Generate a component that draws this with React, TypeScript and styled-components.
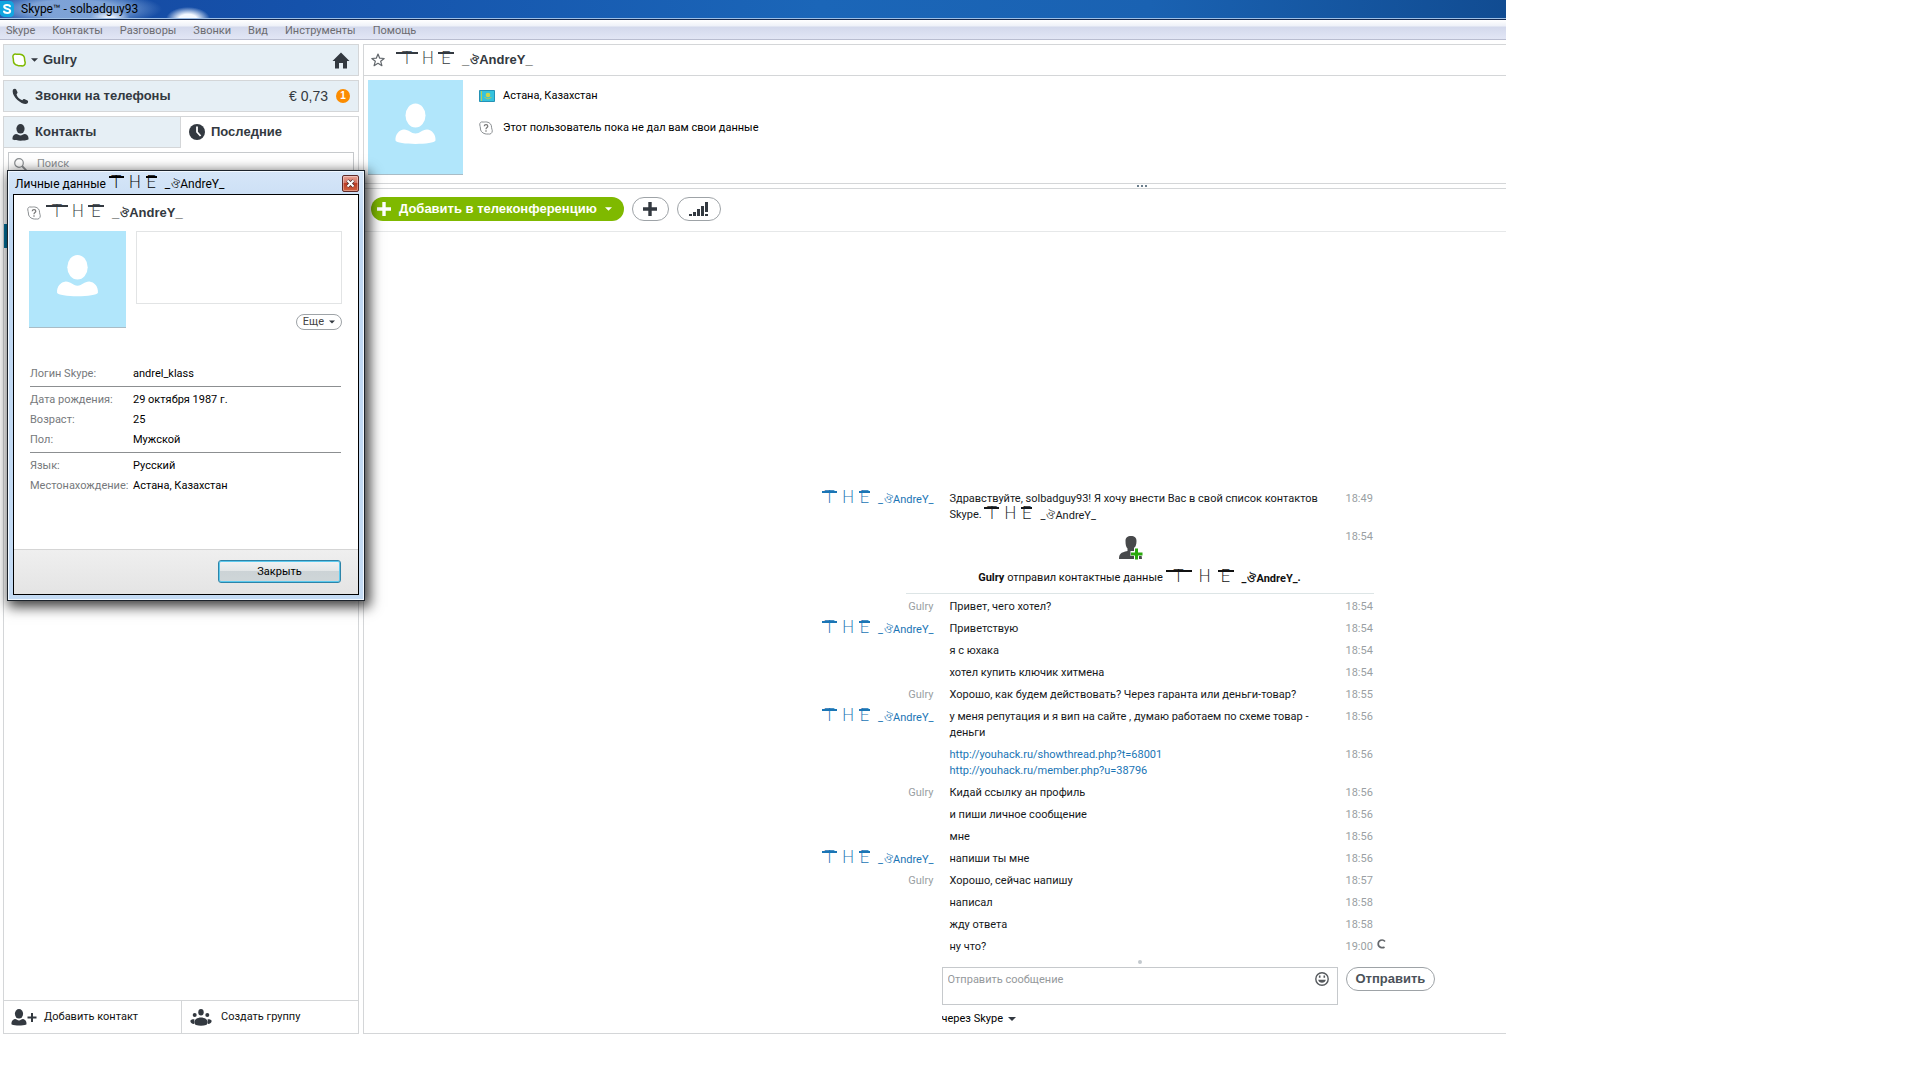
import React from "react";
import styled, { createGlobalStyle, css } from "styled-components";

const ui = `Roboto, "Noto Sans", sans-serif`;
const heading = `"Liberation Sans", Arial, sans-serif`;

const ink = "#333940";
const line = "#d4d6d8";
const panelBlue = "#e6eff5";
const muted = "#9a9fa3";
const blue = "#1a75b5";

const GlobalStyle = createGlobalStyle`
  * { box-sizing: border-box; }
  html, body { margin: 0; background: #fff; }
  body { font: 11px/16px ${ui}; color: #111; }
  button, input, textarea, select { font: inherit; color: inherit; margin: 0; }
  button { cursor: pointer; }
  svg { display: block; flex: none; }
`;

const Viewport = styled.div`
  position: relative;
  min-height: 100vh;
  padding-bottom: 46px;
  margin-right: 414px;
  overflow: hidden;
  display: flex;
`;

const Window = styled.div`
  flex: none;
  width: calc(100% + 414px);
  display: flex;
  flex-direction: column;
`;

const TitleBar = styled.header`
  height: 20px;
  padding: 0 0 2px;
  display: flex;
  align-items: center;
  gap: 6px;
  border-bottom: 1px solid #14284e;
  box-shadow: inset 0 -1px 0 #9fc0e6;
  font: 12px/18px ${ui};
  color: #000;
  background:
    radial-gradient(ellipse 22px 12px at 188px 19px, #f4f9ff 40%, transparent 100%),
    radial-gradient(ellipse 20px 8px at 110px 18px, #e6eefc 20%, transparent 100%),
    radial-gradient(ellipse 90px 18px at 72px 9px, rgba(160, 192, 232, 0.75) 50%, transparent 100%),
    linear-gradient(90deg, #1748a0 0, #1552ab 300px, #1b66b8 820px, #1a62b2 1150px, #114c92 1506px);
`;

const MenuBar = styled.nav`
  height: 20px;
  padding: 2px 6px 0;
  display: flex;
  align-items: center;
  gap: 17px;
  border-bottom: 1px solid #b9bdd0;
  background: linear-gradient(#fff 0, #eef1f8 6px, #d3d9ec 7px, #e2e6f5 100%);
`;

const MenuItem = styled.a`
  color: #6c6c70;
  text-decoration: none;
`;

const Workspace = styled.div`
  flex: 1;
  display: flex;
  gap: 4px;
  padding: 4px 0 0 3px;
`;

const Sidebar = styled.aside`
  width: 356px;
  flex: none;
  display: flex;
  flex-direction: column;
  gap: 4px;
`;

const barText = css`
  font: bold 13px/16px ${heading};
  color: ${ink};
`;

const SideBox = styled.div`
  ${barText}
  height: 32px;
  display: flex;
  align-items: center;
  padding: 0 8px;
  border: 1px solid ${line};
  background: ${panelBlue};
`;

const Grow = styled.span`
  flex: 1;
`;

const StatusButton = styled.button`
  ${barText}
  display: flex;
  align-items: center;
  gap: 5px;
  padding: 0;
  border: 0;
  background: none;
`;

const IconLabel = styled.span`
  display: flex;
  align-items: center;
  gap: 6px;
`;

const Balance = styled.span`
  font: 14px/16px ${heading};
  margin-right: 8px;
`;

const Badge = styled.span`
  width: 14px;
  height: 14px;
  border-radius: 7px;
  background: #fb8c00;
  color: #fff;
  font: bold 10px/14px ${heading};
  text-align: center;
`;

const SidePanel = styled.section`
  flex: 1;
  display: flex;
  flex-direction: column;
  border: 1px solid ${line};
`;

const Tabs = styled.div`
  display: grid;
  grid-template-columns: 1fr 1fr;
`;

const Tab = styled.button<{ $active?: boolean }>`
  ${barText}
  height: 31px;
  display: flex;
  align-items: center;
  gap: 6px;
  padding: 0 8px;
  border: 0;
  border-bottom: 1px solid ${(p) => (p.$active ? "transparent" : line)};
  border-right: 1px solid ${(p) => (p.$active ? "transparent" : line)};
  background: ${(p) => (p.$active ? "#fff" : panelBlue)};
`;

const SearchBox = styled.label`
  display: flex;
  align-items: center;
  gap: 10px;
  height: 24px;
  margin: 4px 4px 0;
  padding: 0 5px;
  border: 1px solid #c6c9cc;
`;

const SearchInput = styled.input`
  flex: 1;
  border: 0;
  padding: 0;
  outline: 0;
  background: none;
  &::placeholder { color: #8d9194; opacity: 1; }
`;

const RecentList = styled.div`
  flex: 1;
  padding-top: 48px;
`;

const RecentRow = styled.div`
  height: 24px;
  background: #00719c;
`;

const SideFooter = styled.div`
  display: grid;
  grid-template-columns: 1fr 1fr;
  border-top: 1px solid ${line};
`;

const FooterButton = styled.button`
  height: 32px;
  display: flex;
  align-items: center;
  gap: 7px;
  padding: 0 7px;
  border: 0;
  background: #fff;
  text-align: left;
  & + & { border-left: 1px solid ${line}; padding-left: 8px; gap: 9px; }
`;

const Main = styled.main`
  flex: 1;
  min-width: 0;
  display: flex;
  flex-direction: column;
  border: 1px solid ${line};
`;

const ContactHeader = styled.div`
  ${barText}
  height: 31px;
  display: flex;
  align-items: center;
  gap: 11px;
  padding: 0 7px;
  border-bottom: 1px solid ${line};
`;

const ContactInfo = styled.section`
  display: flex;
  gap: 16px;
  padding: 4px 4px 8px;
  border-bottom: 1px solid ${line};
`;

const InfoLines = styled.div`
  display: flex;
  flex-direction: column;
  gap: 16px;
  padding-top: 8px;
  color: #000;
`;

const InfoLine = styled.div`
  display: grid;
  grid-template-columns: 16px auto;
  align-items: center;
  gap: 8px;
`;

const Splitter = styled.div`
  height: 5px;
  display: flex;
  justify-content: center;
  align-items: center;
  gap: 2px;
  border-bottom: 1px solid ${line};
`;

const Grip = styled.i`
  width: 2px;
  height: 2px;
  background: #6c7f8d;
`;

const Toolbar = styled.div`
  height: 43px;
  display: flex;
  align-items: center;
  gap: 8px;
  padding: 0 7px 2px;
  border-bottom: 1px solid #e6e8e9;
`;

const pill = css`
  display: flex;
  align-items: center;
  justify-content: center;
  height: 24px;
  border-radius: 12px;
  border: 1px solid #9ea3a7;
  background: #fff;
  color: ${ink};
`;

const CallButton = styled.button`
  ${pill}
  font: bold 13px/16px ${heading};
  gap: 8px;
  padding: 0 12px 0 6px;
  border: 0;
  background: #7fb900;
  color: #fff;
`;

const RoundButton = styled.button<{ $wide?: boolean }>`
  ${pill}
  padding: 0;
  width: ${(p) => (p.$wide ? 44 : 37)}px;
`;

const Chat = styled.section`
  flex: 1;
  display: flex;
  flex-direction: column;
  justify-content: flex-end;
  padding: 0 4px 6px 0;
`;

const columns = css`
  display: grid;
  grid-template-columns: 1fr 396px 1fr;
  column-gap: 8px;
`;

const MessageRow = styled.article`
  ${columns}
  padding: 4px 0 2px;
`;

const Author = styled.div<{ $me?: boolean }>`
  text-align: right;
  color: ${(p) => (p.$me ? muted : blue)};
`;

const Body = styled.div`
  padding: 0 8px;
  color: #16191c;
`;

const Link = styled.a`
  display: block;
  color: ${blue};
  text-decoration: none;
`;

const Time = styled.time`
  display: flex;
  gap: 4px;
  color: ${muted};
`;

const SystemRow = styled.article`
  ${columns}
  padding: 4px 0 7px;
`;

const SystemBody = styled.div`
  grid-column: 2;
  display: flex;
  flex-direction: column;
  align-items: center;
  gap: 10px;
  padding-top: 7px;
  white-space: nowrap;
`;

const EventIcon = styled.span`
  padding-right: 18px;
`;

const Divider = styled.hr`
  width: 468px;
  margin: 0 auto 1px;
  border: 0;
  border-top: 1px solid #dde5e6;
`;

const DotRow = styled.div`
  height: 10px;
  display: flex;
  justify-content: center;
  align-items: center;
`;

const Dot = styled.i`
  width: 4px;
  height: 4px;
  border-radius: 2px;
  background: #c3c9ce;
`;

const Composer = styled.form`
  ${columns}
  row-gap: 6px;
`;

const InputFrame = styled.div`
  grid-column: 2;
  height: 38px;
  display: flex;
  border: 1px solid #c6c9cc;
  padding: 4px 8px 0 5px;
`;

const MessageInput = styled.textarea`
  flex: 1;
  padding: 0;
  border: 0;
  outline: 0;
  resize: none;
  background: none;
  overflow: hidden;
  &::placeholder { color: #95999c; opacity: 1; }
`;

const IconButton = styled.button`
  align-self: flex-start;
  padding: 0;
  border: 0;
  background: none;
`;

const SendButton = styled.button`
  ${pill}
  justify-self: start;
  padding: 0 9px;
  font: bold 13px/16px ${heading};
  color: #4b5259;
`;

const Via = styled.label`
  grid-column: 2;
  display: flex;
  align-items: center;
  gap: 4px;
`;

const ViaSelect = styled.select`
  appearance: none;
  border: 0;
  padding: 0;
  background: none;
  color: #000;
`;

const Dialog = styled.section`
  position: absolute;
  left: 7px;
  top: 170px;
  width: 358px;
  padding: 0 5px 5px;
  border: 1px solid #1c232b;
  background: linear-gradient(#d6e6f8 0, #bfd7f2 60px, #c4dbf4 100%);
  box-shadow: inset 0 0 0 1px #f1f8ff, 3px 4px 12px 2px rgba(0, 0, 0, 0.75);
`;

const DialogTitle = styled.header`
  height: 23px;
  display: flex;
  align-items: center;
  justify-content: space-between;
  font: 12px/16px ${ui};
  color: #000;
  padding: 2px 0 0 2px;
`;

const CloseX = styled.button`
  width: 17px;
  height: 17px;
  padding: 0;
  display: flex;
  align-items: center;
  justify-content: center;
  border: 1px solid #5d2a2a;
  border-radius: 2px;
  background: linear-gradient(#e8a396 0, #d2705e 48%, #bb3d26 50%, #d0603f 100%);
  box-shadow: inset 0 0 0 1px rgba(255, 255, 255, 0.35);
`;

const DialogBody = styled.div`
  border: 1px solid #000;
  background: #fff;
`;

const DialogName = styled.h2`
  ${barText}
  margin: 0;
  height: 36px;
  display: flex;
  align-items: center;
  gap: 5px;
  padding: 0 13px;
`;

const ProfileTop = styled.div`
  display: flex;
  gap: 10px;
  padding: 0 16px 31px 15px;
`;

const ProfileSide = styled.div`
  flex: 1;
  display: flex;
  flex-direction: column;
  align-items: flex-end;
  gap: 10px;
`;

const MoodBox = styled.div`
  align-self: stretch;
  height: 73px;
  border: 1px solid #e2e4e5;
`;

const MoreButton = styled.button`
  ${pill}
  height: 16px;
  gap: 5px;
  padding: 0 6px;
  font-size: 11px;
  color: #444;
`;

const Fields = styled.dl`
  margin: 0 17px 0 16px;
  padding: 3px 0 2px;
  display: grid;
  grid-template-columns: 97px 1fr;
  column-gap: 6px;
  line-height: 20px;
  & + & { border-top: 1px solid #8c8f91; }
`;

const Term = styled.dt`
  color: #76797c;
  white-space: nowrap;
`;

const Value = styled.dd`
  margin: 0;
  color: #000;
`;

const DialogFooter = styled.footer`
  display: flex;
  justify-content: flex-end;
  margin-top: 51px;
  padding: 10px 17px 11px;
  border-top: 1px solid #d5d5d5;
  background: linear-gradient(#efefef, #e4e4e4);
`;

const CloseButton = styled.button`
  width: 123px;
  height: 23px;
  padding: 0;
  border: 1px solid #2d84a8;
  border-radius: 3px;
  box-shadow: inset 0 0 0 1px #5cc9ee;
  background: linear-gradient(#f1f2f3 0, #e2e6e7 48%, #ccd3d6 50%, #cfd6d8 100%);
  color: #000;
`;

/* decorated nickname */
const NickBox = styled.span`
  display: inline-flex;
  align-items: baseline;
  vertical-align: top;
  white-space: nowrap;
  height: 16px;
`;

const Glyph = styled.span<{ $w: number; $bar?: boolean }>`
  width: ${(p) => p.$w}px;
  height: 14px;
  text-align: center;
  font: 200 17px/12px "DejaVu Sans", sans-serif;
  background: ${(p) => (p.$bar ? "linear-gradient(currentColor, currentColor) 0 0 / 100% 2px no-repeat" : "none")};
`;

const Spacer = styled.span`
  width: 8px;
`;

const Ornament = styled.span`
  width: 10px;
  text-align: center;
  font-size: 11px;
  line-height: 12px;
`;

const letterWidths = {
  tight: [15, 22, 11],
  regular: [22, 20, 16],
  wide: [26, 26, 16],
};

const Nick = ({ spread = "regular" }: { spread?: keyof typeof letterWidths }) => {
  const [t, h, e] = letterWidths[spread];
  return (
    <NickBox>
      <Glyph $w={t} $bar>T</Glyph>
      <Glyph $w={h}>H</Glyph>
      <Glyph $w={e} $bar>E</Glyph>
      <Spacer />
      <span>_</span>
      <Ornament>ঔ</Ornament>
      <span>AndreY_</span>
    </NickBox>
  );
};

/* icons */
const Caret = ({ w = 7, color = ink }: { w?: number; color?: string }) => (
  <svg width={w} height={4} viewBox="0 0 8 4"><path d="M0 0h8L4 4z" fill={color} /></svg>
);

const SkypeLogo = () => (
  <svg width="15" height="16" viewBox="0 0 15 16">
    <path d="M0 0h10a5 5 0 0 1 4 5v7a4 4 0 0 1-4 4H4a6 6 0 0 1-4-3z" fill="#12a5e0" />
    <path d="M10 5.2C9.400 3.600 4.200 3.400 4.200 5.800c0 2.600 6 1.600 6 4.200 0 2.600-5.600 2.400-6.200.4" fill="none" stroke="#fff" strokeWidth="2" strokeLinecap="round" />
  </svg>
);

const Cloud = () => (
  <svg width="14" height="14" viewBox="0 0 14 14">
    <path d="M1 4.200C.6 2 2 .7 4.200 1.200c1 .2 2-.2 3.600 0 3.200.4 5 2.800 4.800 5.600 0 1 .6 1.800.6 3 0 2.400-1.800 3.600-4 3-1 0-2 .2-3.200-.2C3 11.900 1.200 9.800 1.400 7 1.400 6 1.100 5.200 1 4.200z" fill="#fff" stroke="#7fb900" strokeWidth="1.500" />
  </svg>
);

const Unknown = () => (
  <svg width="14" height="14" viewBox="0 0 14 14">
    <path d="M.8 4C.4 2 1.800.5 4 1c1.200.2 2-.2 3.800 0 3.200.4 5 2.800 4.800 5.800 0 1 .7 1.800.7 3 0 2.400-2 3.800-4.100 3.200-1 0-2 .2-3.200-.2C3 12 1.200 9.800 1.400 7 1.400 6 .9 5 .8 4z" fill="#fff" stroke="#8b8f92" strokeWidth="1" />
    <path d="M5.200 5.200c.2-2 3.600-2 3.600.1C8.800 6.600 7 6.600 7 8.200M7 9.300v1.400" fill="none" stroke="#777" strokeWidth="1.200" />
  </svg>
);

const Home = () => (
  <svg width="18" height="17" viewBox="0 0 18 17">
    <path d="M9 .5 17.500 9H15v7.500h-4V11H7v5.500H3V9H.5z" fill={ink} />
  </svg>
);

const Phone = () => (
  <svg width="17" height="17" viewBox="0 0 17 17">
    <path d="M1 1.600C2 .6 3.600.4 4.200 1.400l1.300 2.800c.3.700-.2 1.300-1 2 .6 2.600 3 5.200 5.800 6 .8-.9 1.300-1.400 2-1.100l3.200 1.500c1 .5.700 2-.3 3C11 18-1.500 8 1 1.600z" fill={ink} />
  </svg>
);

const Person = () => (
  <svg width="17" height="17" viewBox="0 0 17 17" fill={ink}>
    <ellipse cx="8.500" cy="4.800" rx="4.100" ry="4.800" />
    <path d="M4 10c2 0 3 1.500 4.500 1.500S11 10 13 10c2.500.3 4 3 3.400 5.500-4 1.600-11.800 1.600-15.800 0C0 13 1.500 10.300 4 10z" />
  </svg>
);

const Clock = () => (
  <svg width="16" height="16" viewBox="0 0 16 16">
    <circle cx="8" cy="8" r="8" fill={ink} />
    <path d="M8 2.500V8l3.600 4" fill="none" stroke="#fff" strokeWidth="1.800" />
  </svg>
);

const Magnifier = () => (
  <svg width="13" height="13" viewBox="0 0 13 13" fill="none" stroke="#8a8e91">
    <circle cx="5" cy="5" r="4.300" strokeWidth="1.200" />
    <path d="m8 8 4.300 4.300" strokeWidth="1.800" />
  </svg>
);

const AddPerson = () => (
  <svg width="26" height="17" viewBox="0 0 26 17" fill={ink}>
    <ellipse cx="8" cy="4.800" rx="4.100" ry="4.800" />
    <path d="M4 10c1.600 0 2.500 1.500 4 1.500S10.400 10 12 10c2.500.3 4 3 3.400 5.500-4 1.300-10.800 1.300-14.800 0C0 13 1.500 10.300 4 10z" />
    <path d="M16.500 8.500h9M21 4v9" stroke={ink} strokeWidth="2" />
  </svg>
);

const Group = () => (
  <svg width="22" height="17" viewBox="0 0 22 17" fill={ink}>
    <ellipse cx="11" cy="3.200" rx="2.700" ry="3.200" />
    <circle cx="4.700" cy="6" r="2" /><circle cx="17.300" cy="6" r="2" />
    <path d="M6 10c3-2 7-2 10 0 2 1.500 2.500 5 0 6-3 1-7 1-10 0-2.500-1-2-4.500 0-6z" />
    <path d="M.4 11.500c1-1 2.600-1.500 4-1.200L4 15c-2-.2-4-1.200-3.600-3.500zM21.600 11.500c-1-1-2.600-1.500-4-1.200L18 15c2-.2 4-1.200 3.600-3.500z" />
  </svg>
);

const Star = () => (
  <svg width="14" height="14" viewBox="0 0 14 14">
    <path d="m7 1 1.700 4.200 4.500.3-3.500 2.800 1.200 4.400L7 10.300l-3.900 2.400 1.200-4.400L.8 5.500l4.500-.3z" fill="#fff" stroke="#62676c" strokeWidth="1.200" strokeLinejoin="round" />
  </svg>
);

const Flag = () => (
  <svg width="16" height="12" viewBox="0 0 16 12">
    <path d="M.5.500h15v11H.5z" fill="#35c3de" stroke="#2592b5" />
    <path d="M2.500 1v10" stroke="#b8cc57" />
    <circle cx="9" cy="5" r="2.300" fill="#cdd34c" />
    <path d="M5.500 7c2 2.500 5 2.500 7 0" fill="none" stroke="#b8cc57" />
  </svg>
);

const Plus = ({ color = ink }: { color?: string }) => (
  <svg width="14" height="14" viewBox="0 0 14 14"><path d="M7 0v14M0 7h14" stroke={color} strokeWidth="3.400" /></svg>
);

const Signal = () => (
  <svg width="19" height="15" viewBox="0 0 19 15" fill={ink}>
    <path d="M0 12h3v2H0zM4 10h3v4H4zM8 7h3v7H8zM12 4h3v10h-3zM16 0h3v10h-3zM16 12h3v2h-3z" />
  </svg>
);

const Avatar = ({ size }: { size: number }) => (
  <svg width={size} height={size} viewBox="0 0 95 95">
    <path d="M0 0h95v95H0z" fill="#b1e6fb" />
    <path d="M0 94.500h95" stroke="#a9bcc6" />
    <ellipse cx="47.500" cy="35.500" rx="10" ry="12" fill="#fff" />
    <path d="M36 49.500c5 0 7 4 11.500 4s6.500-4 11.500-4c5 .5 9 5 8.500 11-1 4.500-39 4.500-40 0-.5-6 3.500-10.500 8.500-11z" fill="#fff" />
  </svg>
);

const ContactSent = () => (
  <svg width="24" height="24" viewBox="0 0 24 24">
    <path d="M6.500 5C6.500 1.500 8.500 0 12 0s5.500 1.500 5.500 5c0 3.500-1 6-2.500 7.500V15c3 1 7 1.500 7.500 4L23 23H0c0-5 1.500-6.500 8.500-8v-2.500C7 11 6.500 8.500 6.500 5z" fill="#47494b" />
    <path d="M17.500 11.500v12M11.500 17.500h12" stroke="#fff" strokeWidth="5" />
    <path d="M17.500 12.500v11M12 18h11.500" stroke="#2aa80c" strokeWidth="3" />
  </svg>
);

const Smiley = () => (
  <svg width="14" height="14" viewBox="0 0 14 14">
    <circle cx="7" cy="7" r="6.200" fill="#fff" stroke="#55595d" strokeWidth="1.400" />
    <path d="M4.700 3.500v2.300M9.300 3.500v2.300" stroke="#55595d" strokeWidth="1.600" />
    <path d="M3.200 7.800h7.600c-.4 4-7.200 4-7.600 0z" fill="#55595d" />
  </svg>
);

const Pending = () => (
  <svg width="9" height="10" viewBox="0 0 9 10">
    <path d="M8 2.500C5.500-.5 1.200 1.500 1.200 5S5.500 9.500 7.500 8" fill="none" stroke="#63676b" strokeWidth="1.700" />
  </svg>
);

type Message = { from?: "nick" | "me"; body: React.ReactNode; time: string; pending?: boolean };

const messages: Message[] = [
  { from: "me", body: "Привет, чего хотел?", time: "18:54" },
  { from: "nick", body: "Приветствую", time: "18:54" },
  { body: "я с юхака", time: "18:54" },
  { body: "хотел купить ключик хитмена", time: "18:54" },
  { from: "me", body: "Хорошо, как будем действовать? Через гаранта или деньги-товар?", time: "18:55" },
  { from: "nick", body: "у меня репутация и я вип на сайте , думаю работаем по схеме товар - деньги", time: "18:56" },
  {
    body: (
      <>
        <Link href="#thread">http://youhack.ru/showthread.php?t=68001</Link>
        <Link href="#member">http://youhack.ru/member.php?u=38796</Link>
      </>
    ),
    time: "18:56",
  },
  { from: "me", body: "Кидай ссылку ан профиль", time: "18:56" },
  { body: "и пиши личное сообщение", time: "18:56" },
  { body: "мне", time: "18:56" },
  { from: "nick", body: "напиши ты мне", time: "18:56" },
  { from: "me", body: "Хорошо, сейчас напишу", time: "18:57" },
  { body: "написал", time: "18:58" },
  { body: "жду ответа", time: "18:58" },
  { body: "ну что?", time: "19:00", pending: true },
];

const ChatMessage = ({ from, body, time, pending }: Message) => (
  <MessageRow>
    <Author $me={from === "me"}>{from === "me" ? "Gulry" : from === "nick" ? <Nick spread="tight" /> : null}</Author>
    <Body>{body}</Body>
    <Time>{time}{pending && <Pending />}</Time>
  </MessageRow>
);

const profile: [string, string][][] = [
  [["Логин Skype:", "andrel_klass"]],
  [["Дата рождения:", "29 октября 1987 г."], ["Возраст:", "25"], ["Пол:", "Мужской"]],
  [["Язык:", "Русский"], ["Местонахождение:", "Астана, Казахстан"]],
];

const menu = ["Skype", "Контакты", "Разговоры", "Звонки", "Вид", "Инструменты", "Помощь"];

export default function App() {
  return (
    <Viewport>
      <GlobalStyle />
      <Window>
        <TitleBar><SkypeLogo />Skype™ - solbadguy93</TitleBar>
        <MenuBar>{menu.map((m) => <MenuItem key={m} href="#menu">{m}</MenuItem>)}</MenuBar>
        <Workspace>
          <Sidebar>
            <SideBox>
              <StatusButton><Cloud /><Caret /> Gulry</StatusButton>
              <Grow />
              <Home />
            </SideBox>
            <SideBox>
              <IconLabel><Phone />Звонки на телефоны</IconLabel>
              <Grow />
              <Balance>€ 0,73</Balance>
              <Badge>1</Badge>
            </SideBox>
            <SidePanel>
              <Tabs>
                <Tab><Person />Контакты</Tab>
                <Tab $active><Clock />Последние</Tab>
              </Tabs>
              <SearchBox>
                <Magnifier />
                <SearchInput placeholder="Поиск" aria-label="Поиск" />
              </SearchBox>
              <RecentList><RecentRow /></RecentList>
              <SideFooter>
                <FooterButton><AddPerson />Добавить контакт</FooterButton>
                <FooterButton><Group />Создать группу</FooterButton>
              </SideFooter>
            </SidePanel>
          </Sidebar>
          <Main>
            <ContactHeader><Star /><Nick /></ContactHeader>
            <ContactInfo>
              <Avatar size={95} />
              <InfoLines>
                <InfoLine><Flag />Астана, Казахстан</InfoLine>
                <InfoLine><Unknown />Этот пользователь пока не дал вам свои данные</InfoLine>
              </InfoLines>
            </ContactInfo>
            <Splitter><Grip /><Grip /><Grip /></Splitter>
            <Toolbar>
              <CallButton><Plus color="#fff" />Добавить в телеконференцию<Caret color="#fff" /></CallButton>
              <RoundButton aria-label="Добавить"><Plus /></RoundButton>
              <RoundButton $wide aria-label="Качество связи"><Signal /></RoundButton>
            </Toolbar>
            <Chat>
              <MessageRow>
                <Author><Nick spread="tight" /></Author>
                <Body>Здравствуйте, solbadguy93! Я хочу внести Вас в свой список контактов Skype. <Nick spread="tight" /></Body>
                <Time>18:49</Time>
              </MessageRow>
              <SystemRow>
                <SystemBody>
                  <EventIcon><ContactSent /></EventIcon>
                  <div><b>Gulry</b> отправил контактные данные <b><Nick spread="wide" />.</b></div>
                </SystemBody>
                <Time>18:54</Time>
              </SystemRow>
              <Divider />
              {messages.map((m, i) => <ChatMessage key={i} {...m} />)}
              <DotRow><Dot /></DotRow>
              <Composer onSubmit={(e) => e.preventDefault()}>
                <InputFrame>
                  <MessageInput placeholder="Отправить сообщение" aria-label="Отправить сообщение" />
                  <IconButton type="button" aria-label="Смайлик"><Smiley /></IconButton>
                </InputFrame>
                <SendButton>Отправить</SendButton>
                <Via>
                  <ViaSelect aria-label="Способ отправки"><option>через Skype</option></ViaSelect>
                  <Caret w={8} />
                </Via>
              </Composer>
            </Chat>
          </Main>
        </Workspace>
      </Window>

      <Dialog role="dialog" aria-label="Личные данные">
        <DialogTitle>
          <span>Личные данные <Nick spread="tight" /></span>
          <CloseX aria-label="Закрыть окно">
            <svg width="9" height="9" viewBox="0 0 9 9">
              <path d="m1.500 1.500 6 6m0-6-6 6" stroke="#4a2a2a" strokeWidth="3.400" />
              <path d="m1.500 1.500 6 6m0-6-6 6" stroke="#fff" strokeWidth="2" />
            </svg>
          </CloseX>
        </DialogTitle>
        <DialogBody>
          <DialogName><Unknown /><Nick /></DialogName>
          <ProfileTop>
            <Avatar size={97} />
            <ProfileSide>
              <MoodBox />
              <MoreButton>Еще<Caret w={6} /></MoreButton>
            </ProfileSide>
          </ProfileTop>
          {profile.map((group, i) => (
            <Fields key={i}>
              {group.map(([k, v]) => (
                <React.Fragment key={k}><Term>{k}</Term><Value>{v}</Value></React.Fragment>
              ))}
            </Fields>
          ))}
          <DialogFooter><CloseButton>Закрыть</CloseButton></DialogFooter>
        </DialogBody>
      </Dialog>
    </Viewport>
  );
}
